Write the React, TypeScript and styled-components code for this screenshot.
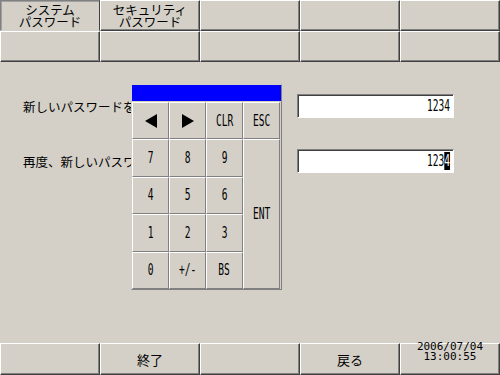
import React from "react";
import styled, { createGlobalStyle, css } from "styled-components";

const GlobalStyle = createGlobalStyle`
  html, body { margin: 0; padding: 0; background: #d4d0c8; }
  #root { width: 500px; height: 375px; overflow: hidden; }
`;

const JP = `"Noto Sans CJK JP", "DejaVu Sans", sans-serif`;

const Screen = styled.div`
  width: 500px;
  height: 375px;
  display: flex;
  flex-direction: column;
  background: #d4d0c8;
  font-family: ${JP};
  color: #000;
  overflow: hidden;
`;

const TabGrid = styled.div`
  display: grid;
  grid-template-columns: repeat(5, 100px);
  grid-template-rows: 31px 31px;
  flex: none;
`;

const raised = css`
  box-sizing: border-box;
  background: #d4d0c8;
  border-top: 1px solid #ffffff;
  border-left: 1px solid #ffffff;
  border-right: 1px solid #404040;
  border-bottom: 1px solid #404040;
  box-shadow: inset -1px -1px 0 #808080;
`;

const PanelButton = styled.div<{ $selected?: boolean }>`
  ${raised}
  display: flex;
  flex-direction: column;
  align-items: center;
  justify-content: center;
  font-size: 12.5px;
  line-height: 12px;
  text-align: center;
  ${(p) =>
    p.$selected &&
    css`
      border-top: 1px solid #808080;
      border-left: 1px solid #808080;
      border-right: 1px solid #404040;
      border-bottom: 1px solid #d4d0c8;
      box-shadow: inset 1px 1px 0 #a0a0a0;
    `}
`;

const Content = styled.div`
  flex: 1;
  position: relative;
  display: flex;
  flex-direction: column;
  gap: 31px;
  padding: 32px 46px 0 23px;
`;

const FieldRow = styled.div`
  display: flex;
  justify-content: space-between;
  align-items: center;
  height: 24px;
`;

const Label = styled.div`
  font-size: 12.5px;
  white-space: nowrap;
  width: 108px;
  overflow: hidden;
`;

const InputBox = styled.div`
  box-sizing: border-box;
  width: 157px;
  height: 24px;
  background: #ffffff;
  border-top: 1px solid #808080;
  border-left: 1px solid #808080;
  border-right: 1px solid #ffffff;
  border-bottom: 1px solid #ffffff;
  box-shadow: inset 1px 1px 0 #404040;
  display: flex;
  align-items: center;
  justify-content: flex-end;
  padding-right: 3px;
  overflow: hidden;
`;

const Narrow = styled.span<{ $origin?: string }>`
  display: inline-block;
  font-family: "DejaVu Sans Mono", monospace;
  font-size: 15px;
  line-height: 14px;
  color: #000;
  transform: scaleX(0.64);
  transform-origin: ${(p) => p.$origin || "center"};
  white-space: nowrap;
`;

const Caret = styled.span`
  background: #000;
  color: #fff;
`;

const Keypad = styled.div`
  position: absolute;
  left: 131px;
  top: 22px;
  width: 151px;
  box-sizing: border-box;
  border-top: 1px solid #d4d0c8;
  border-left: 1px solid #d4d0c8;
  border-right: 1px solid #808080;
  border-bottom: 1px solid #808080;
  background: #d4d0c8;
`;

const KeyHeader = styled.div`
  height: 17px;
  background: #0000ff;
  box-sizing: border-box;
  border-bottom: 1px solid #d4d0c8;
`;

const KeyGrid = styled.div`
  display: grid;
  grid-template-columns: repeat(4, 37px);
  grid-template-rows: repeat(5, 37.4px);
`;

const Key = styled.div<{ $tall?: boolean }>`
  box-sizing: border-box;
  border-top: 1px solid #ffffff;
  border-left: 1px solid #ffffff;
  border-right: 1px solid #808080;
  border-bottom: 1px solid #808080;
  display: flex;
  align-items: center;
  justify-content: center;
  ${(p) =>
    p.$tall &&
    css`
      grid-row: span 4;
      align-items: flex-start;
      padding-top: 67px;
    `}
`;

const Arrow = ({ dir }: { dir: "left" | "right" }) => (
  <svg width="12" height="14" viewBox="0 0 12 14">
    {dir === "left" ? (
      <polygon points="12,0 12,14 0,7" fill="#000" />
    ) : (
      <polygon points="0,0 0,14 12,7" fill="#000" />
    )}
  </svg>
);

const BottomBar = styled.div`
  display: grid;
  grid-template-columns: repeat(5, 100px);
  height: 32px;
  flex: none;
`;

const BottomButton = styled.div`
  ${raised}
  display: flex;
  align-items: center;
  justify-content: center;
  font-size: 13px;
`;

const ClockCell = styled.div`
  ${raised}
  display: flex;
  flex-direction: column;
  align-items: center;
  justify-content: flex-start;
  font-family: "DejaVu Sans Mono", monospace;
  font-size: 11px;
  line-height: 10px;
`;

const ClockLine = styled.span`
  display: block;
  transform: translateY(-2px);
`;

export default function App() {
  const keys: React.ReactNode[] = [
    <Key key="l"><Arrow dir="left" /></Key>,
    <Key key="r"><Arrow dir="right" /></Key>,
    <Key key="clr"><Narrow>CLR</Narrow></Key>,
    <Key key="esc"><Narrow>ESC</Narrow></Key>,
    <Key key="7"><Narrow>7</Narrow></Key>,
    <Key key="8"><Narrow>8</Narrow></Key>,
    <Key key="9"><Narrow>9</Narrow></Key>,
    <Key key="ent" $tall><Narrow>ENT</Narrow></Key>,
    <Key key="4"><Narrow>4</Narrow></Key>,
    <Key key="5"><Narrow>5</Narrow></Key>,
    <Key key="6"><Narrow>6</Narrow></Key>,
    <Key key="1"><Narrow>1</Narrow></Key>,
    <Key key="2"><Narrow>2</Narrow></Key>,
    <Key key="3"><Narrow>3</Narrow></Key>,
    <Key key="0"><Narrow>0</Narrow></Key>,
    <Key key="pm"><Narrow>+/-</Narrow></Key>,
    <Key key="bs"><Narrow>BS</Narrow></Key>,
  ];

  return (
    <>
      <GlobalStyle />
      <Screen>
        <TabGrid>
          <PanelButton $selected>
            <span>システム</span>
            <span>パスワード</span>
          </PanelButton>
          <PanelButton>
            <span>セキュリティ</span>
            <span>パスワード</span>
          </PanelButton>
          <PanelButton />
          <PanelButton />
          <PanelButton />
          <PanelButton />
          <PanelButton />
          <PanelButton />
          <PanelButton />
          <PanelButton />
        </TabGrid>
        <Content>
          <FieldRow>
            <Label>新しいパスワードを入力</Label>
            <InputBox>
              <Narrow $origin="right">1234</Narrow>
            </InputBox>
          </FieldRow>
          <FieldRow>
            <Label>再度、新しいパスワードを入力</Label>
            <InputBox>
              <Narrow $origin="right">
                123<Caret>4</Caret>
              </Narrow>
            </InputBox>
          </FieldRow>
          <Keypad>
            <KeyHeader />
            <KeyGrid>{keys}</KeyGrid>
          </Keypad>
        </Content>
        <BottomBar>
          <BottomButton />
          <BottomButton>終了</BottomButton>
          <BottomButton />
          <BottomButton>戻る</BottomButton>
          <ClockCell>
            <ClockLine>2006/07/04</ClockLine>
            <ClockLine>13:00:55</ClockLine>
          </ClockCell>
        </BottomBar>
      </Screen>
    </>
  );
}
